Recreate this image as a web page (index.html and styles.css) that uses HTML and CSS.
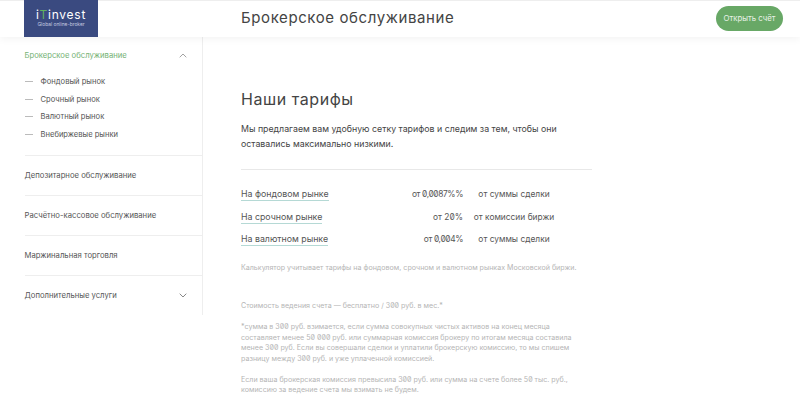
FILE: index.html
```html
<!DOCTYPE html>
<html lang="ru">
<head>
<meta charset="utf-8">
<title>Брокерское обслуживание</title>
<link rel="stylesheet" href="styles.css">
</head>
<body>
<header class="header">
  <a class="logo">
    <span class="logo-name">i<span class="logo-t">T</span>invest</span>
    <span class="logo-sub">Global online-broker</span>
  </a>
  <h1 class="page-title">Брокерское обслуживание</h1>
  <a class="open-btn">Открыть счёт</a>
</header>
<div class="layout">
  <nav class="sidebar">
    <section class="nav-group nav-open">
      <div class="nav-head nav-active">
        <span>Брокерское обслуживание</span>
        <svg class="chev" viewBox="0 0 8 5" width="8" height="5"><path d="M.7 4.3 4 1l3.3 3.3" fill="none" stroke="#8a8a8a" stroke-width=".8"/></svg>
      </div>
      <ul class="sub">
        <li>Фондовый рынок</li>
        <li>Срочный рынок</li>
        <li>Валютный рынок</li>
        <li>Внебиржевые рынки</li>
      </ul>
    </section>
    <section class="nav-group"><div class="nav-head"><span>Депозитарное обслуживание</span></div></section>
    <section class="nav-group"><div class="nav-head"><span>Расчётно-кассовое обслуживание</span></div></section>
    <section class="nav-group"><div class="nav-head"><span>Маржинальная торговля</span></div></section>
    <section class="nav-group"><div class="nav-head">
      <span>Дополнительные услуги</span>
      <svg class="chev" viewBox="0 0 8 5" width="8" height="5"><path d="M.7.7 4 4 7.3.7" fill="none" stroke="#6a6a6a" stroke-width=".8"/></svg>
    </div></section>
  </nav>
  <main class="content">
    <h2 class="section-title">Наши тарифы</h2>
    <p class="lead">Мы предлагаем вам удобную сетку тарифов и следим за тем, чтобы они оставались максимально низкими.</p>
    <div class="rates">
      <a class="rate-link"><span>На фондовом рынке</span></a><span class="rate-val rate-tight">от 0,0087%%</span><span class="rate-base">от суммы сделки</span>
      <a class="rate-link"><span>На срочном рынке</span></a><span class="rate-val">от 20%</span><span class="rate-base">от комиссии биржи</span>
      <a class="rate-link"><span>На валютном рынке</span></a><span class="rate-val rate-tight">от 0,004%</span><span class="rate-base">от суммы сделки</span>
    </div>
    <p class="note note-calc">Калькулятор учитывает тарифы на фондовом, срочном и валютном рынках Московской биржи.</p>
    <p class="note note-cost">Стоимость ведения счета — бесплатно / 300 руб. в мес.*</p>
    <p class="note note-star">*сумма в 300 руб. взимается, если сумма совокупных чистых активов на конец месяца составляет менее 50 000 руб. или суммарная комиссия брокеру по итогам месяца составила менее 300 руб. Если вы совершали сделки и уплатили брокерскую комиссию, то мы спишем разницу между 300 руб. и уже уплаченной комиссией.</p>
    <p class="note note-star">Если ваша брокерская комиссия превысила 300 руб. или сумма на счете более 50 тыс. руб., комиссию за ведение счета мы взимать не будем.</p>
  </main>
</div>
</body>
</html>
```
FILE: styles.css
```css
* { box-sizing: border-box; }
html, body { margin: 0; height: 400px; overflow: hidden; background: #fff; }
body { font-family: Inter, "Noto Sans", sans-serif; color: #444; font-feature-settings: "zero" 1; }
p, h1, h2, ul { margin: 0; padding: 0; }
.header {
  height: 37px; display: flex; align-items: center; padding: 0 17px 0 24px;
  border-top: 1px solid #eee; box-shadow: 0 2px 8px rgba(0,0,0,.05); position: relative;
}
.logo {
  width: 74px; height: 37px; margin-top: -1px; background: #3a4a80; color: #fff;
  display: flex; flex-direction: column; align-items: center; justify-content: center; padding-bottom: 2px;
}
.logo-name { font-size: 12px; line-height: 12px; letter-spacing: .75px; }
.logo-t { color: #5fb35f; }
.logo-sub { font-size: 4.9px; line-height: 6px; color: #c8cde0; }
.page-title { margin-left: 143px; margin-top: -3px; font-size: 15px; font-weight: 400; letter-spacing: .6px; color: #444; flex: 1; }
.open-btn {
  width: 67px; height: 25px; border-radius: 13px; background: #68a866; color: #e8f2e8;
  font-size: 7.8px; display: flex; align-items: center; justify-content: center;
  margin-top: -2px;
}
.layout { display: grid; grid-template-columns: 203px 1fr; align-items: start; }
.sidebar { margin-left: 24.5px; height: 278px; border-right: 1px solid #eee; }
.nav-group { border-top: 1px solid #eee; height: 40px; }
.nav-group.nav-open { border-top: 0; height: 118px; }
.nav-head {
  height: 39px; display: flex; align-items: center; justify-content: space-between;
  padding-right: 15px; font-size: 7.7px; color: #555;
}
.nav-active { color: #74b274; height: 37px; }
.sub { list-style: none; margin-top: -1px; }
.sub li { display: flex; align-items: center; height: 17.6px; font-size: 7.6px; color: #555; }
.sub li::before { content: ""; width: 8px; height: 1px; background: #bbb; margin-right: 8px; }
.content { padding: 52px 0 0 38px; width: 390px; }
.section-title { font-size: 16px; font-weight: 400; letter-spacing: .55px; line-height: 20px; color: #444; }
.lead { margin-top: 13px; font-size: 8.8px; line-height: 14.5px; color: #444; padding-bottom: 18px; border-bottom: 1px solid #e8e8e8; width: 351px; }
.rates {
  display: grid; grid-template-columns: 130px 92px 102px; width: 351px; row-gap: 9.5px;
  margin-top: 18px; font-size: 8.4px; line-height: 12px; align-items: start;
}
.rate-link { font-size: 8.8px; }
.rate-link span { display: inline-block; border-bottom: 1px solid #b5d9d5; color: #555; }
.rate-val { text-align: right; color: #555; }
.rate-tight { letter-spacing: -.4px; }
.rate-base { text-align: center; color: #555; }
.note { font-size: 7.1px; line-height: 10.5px; color: #b5b5b5; width: 340px; }
.note-calc { margin-top: 17px; }
.note-cost { margin-top: 27.5px; }
.note-star { margin-top: 10.5px; }
```
